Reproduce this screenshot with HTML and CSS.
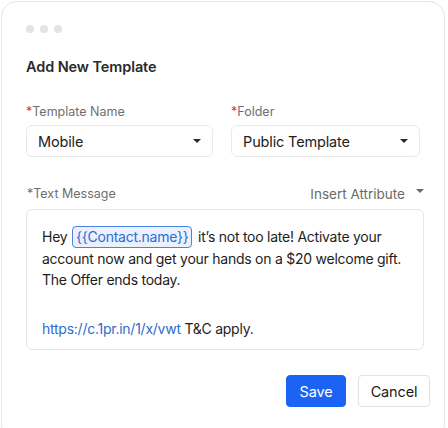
FILE: index.html
```html
<!DOCTYPE html>
<html lang="en">
<head>
  <meta charset="UTF-8">
  <title>Add New Template</title>
  <link rel="stylesheet" href="styles.css">
</head>
<body>
  <div class="card">
    <!-- Window dots -->
    <div class="dots"><span></span><span></span><span></span></div>

    <h2 class="title">Add New Template</h2>

    <div class="row">
      <div class="field">
        <label class="label"><span class="req">*</span>Template Name</label>
        <div class="select">
          <span>Mobile</span>
          <span class="caret"></span>
        </div>
      </div>
      <div class="field">
        <label class="label"><span class="req">*</span>Folder</label>
        <div class="select">
          <span>Public Template</span>
          <span class="caret"></span>
        </div>
      </div>
    </div>

    <div class="msg-head">
      <label class="label">*Text Message</label>
      <div class="insert">Insert Attribute <span class="caret"></span></div>
    </div>

    <div class="message">
      <p>Hey <span class="chip">{{Contact.name}}</span> it’s not too late! Activate your account now and get your hands on a $20 welcome gift. The Offer ends today.</p>
      <p><a class="link" href="#">https://c.1pr.in/1/x/vwt</a> T&amp;C apply.</p>
    </div>

    <div class="actions">
      <button class="btn btn-primary">Save</button>
      <button class="btn btn-cancel">Cancel</button>
    </div>
  </div>
</body>
</html>
```

FILE: styles.css
```css
/* Base */
body {
  margin: 0;
  background: #fff;
  font-family: Inter, "Open Sans", sans-serif;
  color: #1c1c1c;
}

/* Card */
.card {
  margin: 1px 0 0 1px;
  width: 444px;
  height: 440px;
  box-sizing: border-box;
  border: 1px solid #e6e6e6;
  border-radius: 16px;
  padding: 23px 24px 0 24px;
}
.dots {
  display: flex;
  gap: 6px;
  height: 8px;
}
.dots span {
  width: 8px;
  height: 8px;
  border-radius: 50%;
  background: #e3e3e3;
}
.title {
  margin: 25px 0 0 0;
  font-size: 14.5px;
  font-weight: 600;
  line-height: 18px;
  letter-spacing: -0.1px;
  color: #2a2a2a;
}

/* Fields */
.row {
  display: flex;
  gap: 18px;
  margin-top: 28px;
}
.field {
  width: 189px;
}
.field + .field {
  width: 191px;
}
.label {
  display: block;
  font-size: 12.5px;
  color: #6f6f6f;
  line-height: 16px;
}
.req {
  color: #d9343f;
}
.select {
  margin-top: 5px;
  height: 32px;
  box-sizing: border-box;
  border: 1px solid #e9e9e9;
  border-radius: 6px;
  display: flex;
  align-items: center;
  justify-content: space-between;
  padding: 0 11px 0 11px;
  font-size: 14.5px;
  letter-spacing: -0.15px;
  color: #222;
}
.caret {
  display: inline-block;
  width: 0;
  height: 0;
  border-left: 4px solid transparent;
  border-right: 4px solid transparent;
  border-top: 4px solid #2a2a2a;
}

/* Message */
.msg-head {
  display: flex;
  justify-content: space-between;
  align-items: center;
  margin-top: 29px;
  width: 400px;
}
.msg-head .label {
  padding-left: 1px;
}
.insert {
  font-size: 13.5px;
  color: #6a6a6a;
  display: flex;
  align-items: center;
  gap: 11px;
  margin-right: 2px;
}
.insert .caret {
  border-top-color: #6a6a6a;
  margin-top: -6px;
}
.message {
  margin-top: 7px;
  width: 398px;
  height: 141px;
  box-sizing: border-box;
  border: 1px solid #e6e6e6;
  border-radius: 6px;
  padding: 16px 15px 0 15px;
  font-size: 14px;
  line-height: 21px;
  letter-spacing: -0.25px;
  color: #1d1d1d;
}
.message p {
  margin: 0 0 28px 0;
}
.chip {
  display: inline-block;
  border: 1px solid #4b82e6;
  background: #eaf1fd;
  color: #2d6cd8;
  border-radius: 4px;
  padding: 0 3px;
  line-height: 20px;
  margin: 0 2px 0 1px;
}
.link {
  color: #2f6bce;
  text-decoration: none;
}

/* Buttons */
.actions {
  display: flex;
  justify-content: flex-end;
  gap: 12px;
  margin-top: 25px;
  margin-right: -10px;
}
.btn {
  height: 32px;
  width: 72px;
  padding: 0;
  border: 1px solid #e2e2e2;
  border-radius: 4px;
  background: #fff;
  font-family: inherit;
  font-size: 14.5px;
  letter-spacing: -0.15px;
  color: #1c1c1c;
}
.btn-primary {
  width: 60px;
  background: #1b63f5;
  border-color: #1b63f5;
  color: #fff;
}
```
